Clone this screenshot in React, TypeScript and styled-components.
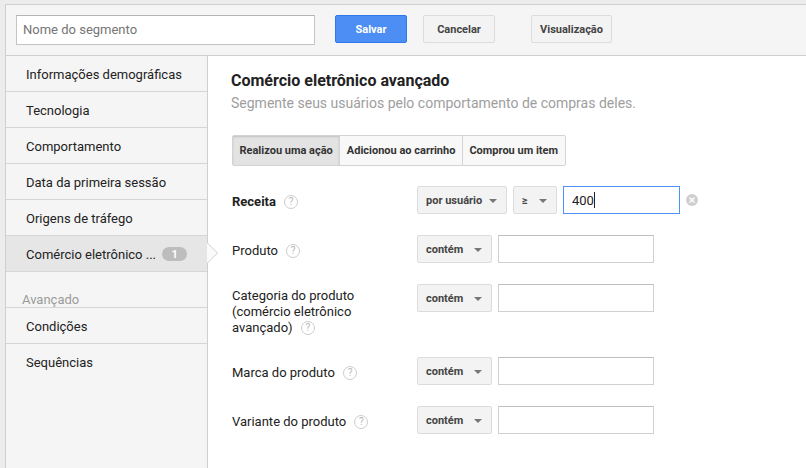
import React from "react";
import styled, { createGlobalStyle } from "styled-components";

const GlobalStyle = createGlobalStyle`
  html, body {
    margin: 0;
    padding: 0;
    background: #ececec;
    font-family: Roboto, "Liberation Sans", Arial, sans-serif;
    overflow: hidden;
  }
`;

const Frame = styled.div`
  margin: 4px 0 0 5px;
  height: 464px;
  border-left: 1px solid #cfcfcf;
  border-top: 1px solid #cfcfcf;
  display: flex;
  flex-direction: column;
  background: #fff;
`;

const Header = styled.div`
  height: 51px;
  box-sizing: border-box;
  display: flex;
  align-items: flex-start;
  padding: 10px 0 0 10px;
  background: #f5f5f5;
  border-bottom: 1px solid #cfcfcf;
`;

const NameInput = styled.div`
  width: 299px;
  height: 30px;
  box-sizing: border-box;
  border: 1px solid #c4c4c4;
  border-top-color: #b5b5b5;
  background: #fff;
  color: #757575;
  font-size: 13px;
  line-height: 28px;
  padding-left: 6px;
`;

const Button = styled.div<{ $primary?: boolean; $width: number; $gap: number }>`
  width: ${(p) => p.$width}px;
  height: 28px;
  box-sizing: border-box;
  margin-left: ${(p) => p.$gap}px;
  border-radius: 2px;
  border: 1px solid ${(p) => (p.$primary ? "#3079ed" : "#dcdcdc")};
  background: ${(p) => (p.$primary ? "#4d8ef4" : "#f3f3f3")};
  color: ${(p) => (p.$primary ? "#fff" : "#444")};
  font-size: 11px;
  font-weight: 700;
  display: flex;
  align-items: center;
  justify-content: center;
`;

const Body = styled.div`
  flex: 1;
  display: flex;
`;

const Sidebar = styled.div`
  width: 201px;
  flex-shrink: 0;
  background: #f5f5f5;
  border-right: 1px solid #cfcfcf;
  display: flex;
  flex-direction: column;
`;

const NavItem = styled.div<{ $active?: boolean; $last?: boolean }>`
  position: relative;
  height: 36px;
  box-sizing: border-box;
  display: flex;
  align-items: center;
  padding: 1px 0 0 20px;
  font-size: 13px;
  color: #222;
  background: ${(p) => (p.$active ? "#e6e6e6" : "transparent")};
  border-bottom: ${(p) => (p.$last ? "none" : "1px solid #d6d6d6")};

  ${(p) =>
    p.$active &&
    `
    &::before, &::after {
      content: "";
      position: absolute;
      top: 7px;
      width: 0;
      height: 0;
      border-top: 10px solid transparent;
      border-bottom: 10px solid transparent;
      z-index: 2;
    }
    &::before {
      right: -11px;
      border-left: 10px solid #cfcfcf;
    }
    &::after {
      right: -10px;
      border-left: 10px solid #fafafa;
    }
  `}
`;

const Badge = styled.span`
  margin-left: 6px;
  width: 25px;
  height: 14px;
  border-radius: 7px;
  background: #bdbdbd;
  color: #fff;
  font-size: 11px;
  font-weight: 700;
  display: flex;
  align-items: center;
  justify-content: center;
`;

const GroupTitle = styled.div`
  height: 36px;
  box-sizing: border-box;
  display: flex;
  align-items: flex-end;
  padding: 0 0 0 16px;
  font-size: 13px;
  line-height: 14px;
  color: #9a9a9a;
  border-bottom: 1px solid #d6d6d6;
`;

const Main = styled.div`
  flex: 1;
  background: #fff;
  padding: 15px 0 0 23px;
`;

const Title = styled.div`
  font-size: 16px;
  font-weight: 700;
  color: #222;
  line-height: 20px;
`;

const Subtitle = styled.div`
  font-size: 14px;
  color: #9e9e9e;
  line-height: 22px;
  margin-top: 1px;
`;

const Tabs = styled.div`
  display: inline-flex;
  margin: 21px 0 0 1px;
  border: 1px solid #d3d3d3;
  border-radius: 2px;
  height: 31px;
  box-sizing: border-box;
`;

const Tab = styled.div<{ $active?: boolean }>`
  display: flex;
  align-items: center;
  padding: 0 6.5px;
  font-size: 11px;
  font-weight: 700;
  color: #333;
  background: ${(p) => (p.$active ? "#e3e3e3" : "#f8f8f8")};
  box-shadow: ${(p) => (p.$active ? "inset 0 1px 2px rgba(0,0,0,0.15)" : "none")};
  & + & {
    border-left: 1px solid #d3d3d3;
  }
`;

const Rows = styled.div`
  margin-top: 20px;
  display: flex;
  flex-direction: column;
  gap: 21px;
`;

const Row = styled.div`
  display: flex;
  align-items: flex-start;
`;

const Label = styled.div<{ $bold?: boolean; $narrow?: boolean }>`
  width: 186px;
  padding: ${(p) => (p.$narrow ? "4px 50px 0 1px" : "8px 0 0 1px")};
  box-sizing: border-box;
  font-size: 13px;
  line-height: 16px;
  color: #222;
  font-weight: ${(p) => (p.$bold ? 700 : 400)};
`;

const Help = styled.span`
  display: inline-flex;
  width: 14px;
  height: 14px;
  margin-left: 5px;
  border: 1px solid #cdcdcd;
  border-radius: 50%;
  align-items: center;
  justify-content: center;
  font-size: 10px;
  font-weight: 400;
  color: #b8b8b8;
  vertical-align: 1px;
  box-sizing: border-box;
`;

const Controls = styled.div`
  display: flex;
  align-items: center;
  gap: 6px;
`;

const Select = styled.div<{ $width: number }>`
  width: ${(p) => p.$width}px;
  height: 28px;
  box-sizing: border-box;
  border: 1px solid #dcdcdc;
  border-radius: 2px;
  background: #f3f3f3;
  display: flex;
  align-items: center;
  justify-content: space-between;
  padding: 0 9px 0 8px;
  font-size: 11px;
  font-weight: 700;
  color: #444;
`;

const Caret = styled.span`
  width: 0;
  height: 0;
  margin-top: 2px;
  border-left: 4px solid transparent;
  border-right: 4px solid transparent;
  border-top: 4px solid #777;
`;

const TextField = styled.div<{ $width: number; $focus?: boolean }>`
  width: ${(p) => p.$width}px;
  height: 28px;
  box-sizing: border-box;
  border: 1px solid ${(p) => (p.$focus ? "#4d90fe" : "#d0d0d0")};
  border-top-color: ${(p) => (p.$focus ? "#4d90fe" : "#c0c0c0")};
  background: #fff;
  font-size: 13px;
  color: #222;
  display: flex;
  align-items: center;
  padding-left: 8px;
`;

const Cursor = styled.span`
  width: 1px;
  height: 16px;
  background: #222;
`;

const Clear = styled.span`
  width: 12px;
  height: 12px;
  border-radius: 50%;
  background: #cfcfcf;
  display: flex;
  align-items: center;
  justify-content: center;
`;

const HelpIcon = () => <Help>?</Help>;

const Dropdown: React.FC<{ label: string; width: number }> = ({ label, width }) => (
  <Select $width={width}>
    <span>{label}</span>
    <Caret />
  </Select>
);

const navItems = [
  "Informações demográficas",
  "Tecnologia",
  "Comportamento",
  "Data da primeira sessão",
  "Origens de tráfego",
];

const fields = ["Produto", "Categoria do produto (comércio eletrônico avançado)", "Marca do produto", "Variante do produto"];

export default function App() {
  return (
    <>
      <GlobalStyle />
      <Frame>
        <Header>
          <NameInput>Nome do segmento</NameInput>
          <Button $primary $width={72} $gap={20}>Salvar</Button>
          <Button $width={72} $gap={16}>Cancelar</Button>
          <Button $width={81} $gap={36}>Visualização</Button>
        </Header>
        <Body>
          <Sidebar>
            {navItems.map((item) => (
              <NavItem key={item}>{item}</NavItem>
            ))}
            <NavItem $active>
              Comércio eletrônico ...
              <Badge>1</Badge>
            </NavItem>
            <GroupTitle>Avançado</GroupTitle>
            <NavItem>Condições</NavItem>
            <NavItem $last>Sequências</NavItem>
          </Sidebar>
          <Main>
            <Title>Comércio eletrônico avançado</Title>
            <Subtitle>Segmente seus usuários pelo comportamento de compras deles.</Subtitle>
            <Tabs>
              <Tab $active>Realizou uma ação</Tab>
              <Tab>Adicionou ao carrinho</Tab>
              <Tab>Comprou um item</Tab>
            </Tabs>
            <Rows>
              <Row>
                <Label $bold>
                  Receita <HelpIcon />
                </Label>
                <Controls>
                  <Dropdown label="por usuário" width={90} />
                  <Dropdown label="≥" width={44} />
                  <TextField $width={117} $focus>
                    400
                    <Cursor />
                  </TextField>
                  <Clear>
                    <svg width="6" height="6" viewBox="0 0 6 6">
                      <path d="M0.5 0.5L5.5 5.5M5.5 0.5L0.5 5.5" stroke="#fff" strokeWidth="1.4" />
                    </svg>
                  </Clear>
                </Controls>
              </Row>
              {fields.map((f) => (
                <Row key={f}>
                  <Label $narrow={f.length > 30}>
                    {f} <HelpIcon />
                  </Label>
                  <Controls>
                    <Dropdown label="contém" width={75} />
                    <TextField $width={156} />
                  </Controls>
                </Row>
              ))}
            </Rows>
          </Main>
        </Body>
      </Frame>
    </>
  );
}
